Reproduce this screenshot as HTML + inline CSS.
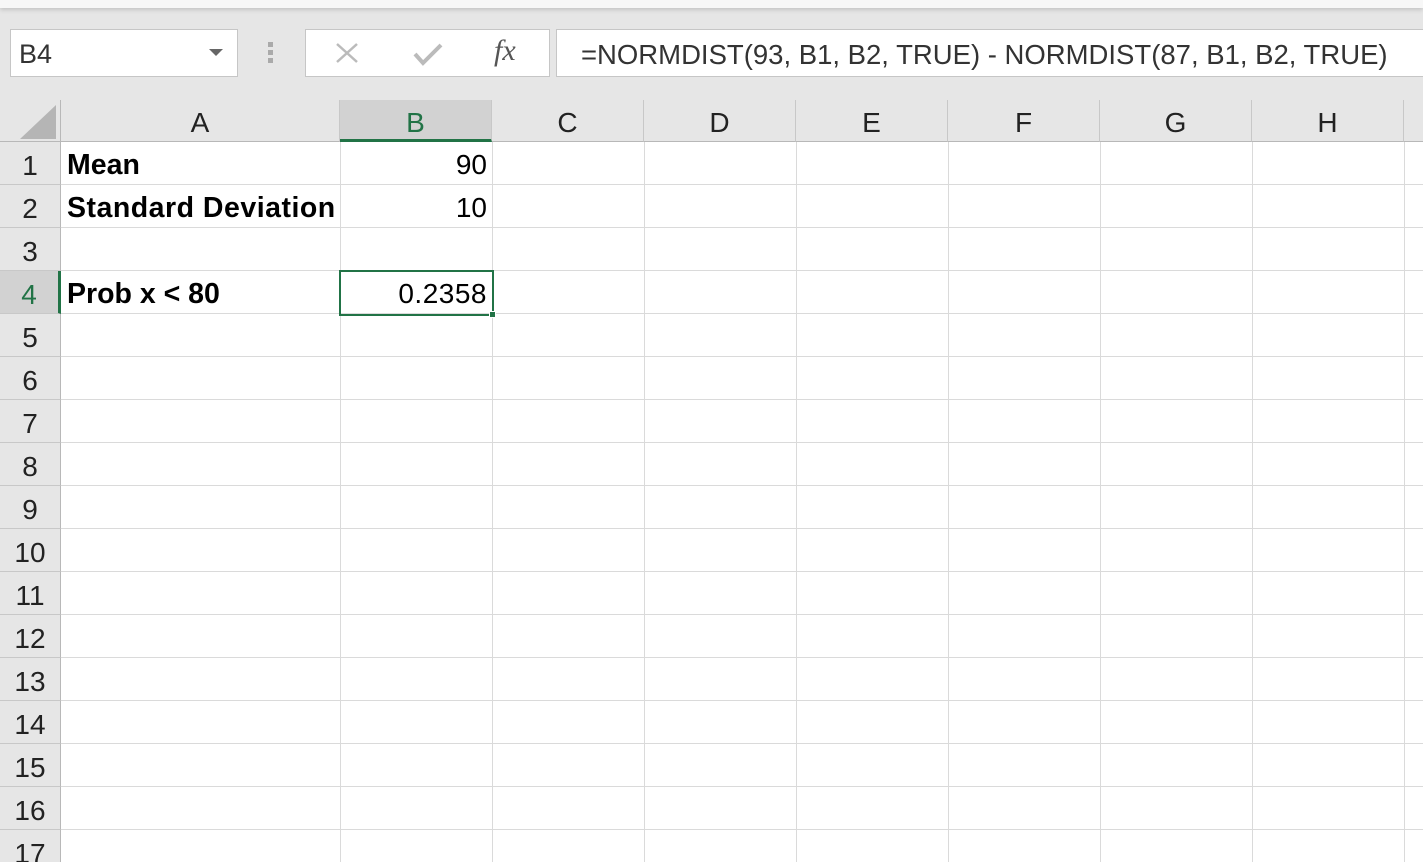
<!DOCTYPE html>
<html><head><meta charset="utf-8"><style>
*{margin:0;padding:0;box-sizing:border-box}
html,body{width:1423px;height:862px;overflow:hidden}
body{background:#e6e6e6;font-family:"Liberation Sans",sans-serif;position:relative}
.a{position:absolute}
.top{left:0;top:0;width:1423px;height:8px;background:#f7f7f7;box-shadow:0 2px 4px rgba(0,0,0,.15)}
.box{background:#fff;border:1px solid #c6c6c6}
.grid{left:0;top:100px;width:1423px;height:762px;background:#fff}
.ch{top:100px;height:42px;background:#e6e6e6;border-right:1px solid #c8c8c8;border-bottom:1px solid #b8b8b8;font-size:28px;color:#222;text-align:center;line-height:46px}
.rh{left:0;width:61px;height:43px;background:#e6e6e6;border-right:1px solid #b8b8b8;border-bottom:1px solid #c8c8c8;font-size:28px;color:#222;text-align:center;line-height:48px}
.hl{left:61px;width:1362px;height:1px;background:#dadada}
.vl{top:142px;width:1px;height:720px;background:#dadada}
.t{font-size:28px;line-height:46px;color:#000}
.b{font-weight:bold;font-size:28.5px}
</style></head><body>
<div class="a top"></div>
<div class="a box" style="left:10px;top:29px;width:228px;height:48px;font-size:27px;line-height:48px;padding-left:8px;color:#333">B4</div>
<div class="a" style="left:209px;top:49px;width:0;height:0;border-left:7px solid transparent;border-right:7px solid transparent;border-top:7px solid #666"></div>
<div class="a" style="left:268px;top:42px;width:5px;height:22px;background:repeating-linear-gradient(#aaa 0 5px,transparent 5px 8px)"></div>
<div class="a box" style="left:305px;top:29px;width:245px;height:48px"></div>
<svg class="a" style="left:334px;top:42px" width="26" height="22"><path d="M3 2L23 20M23 2L3 20" stroke="#bbb" stroke-width="2.5"/></svg>
<svg class="a" style="left:412px;top:41px" width="32" height="26"><path d="M3 13L11 22L29 4" stroke="#bbb" stroke-width="4" fill="none"/></svg>
<div class="a" style="left:494px;top:34px;font-family:'Liberation Serif',serif;font-style:italic;font-size:30px;color:#555">fx</div>
<div class="a box" style="left:556px;top:29px;width:880px;height:48px;font-size:27.5px;line-height:49px;padding-left:24px;color:#333;white-space:nowrap">=NORMDIST(93, B1, B2, TRUE) - NORMDIST(87, B1, B2, TRUE)</div>
<div class="a grid"></div>
<div class="a" style="left:0;top:100px;width:61px;height:42px;background:#e6e6e6;border-right:1px solid #b8b8b8;border-bottom:1px solid #b8b8b8"></div>
<div class="a" style="left:20px;top:105px;width:0;height:0;border-left:36px solid transparent;border-bottom:34px solid #b5b5b5"></div>
<div class="a ch" style="left:61px;width:279px">A</div>
<div class="a ch" style="left:340px;width:152px;background:#d2d2d2;color:#217346;border-bottom:3px solid #217346">B</div>
<div class="a ch" style="left:492px;width:152px">C</div>
<div class="a ch" style="left:644px;width:152px">D</div>
<div class="a ch" style="left:796px;width:152px">E</div>
<div class="a ch" style="left:948px;width:152px">F</div>
<div class="a ch" style="left:1100px;width:152px">G</div>
<div class="a ch" style="left:1252px;width:152px">H</div>
<div class="a ch" style="left:1404px;width:30px"></div>
<div class="a rh" style="top:142px">1</div><div class="a rh" style="top:185px">2</div><div class="a rh" style="top:228px">3</div>
<div class="a rh" style="top:271px;background:#d2d2d2;color:#217346;border-right:3px solid #217346">4</div>
<div class="a rh" style="top:314px">5</div><div class="a rh" style="top:357px">6</div><div class="a rh" style="top:400px">7</div><div class="a rh" style="top:443px">8</div><div class="a rh" style="top:486px">9</div><div class="a rh" style="top:529px">10</div><div class="a rh" style="top:572px">11</div><div class="a rh" style="top:615px">12</div><div class="a rh" style="top:658px">13</div><div class="a rh" style="top:701px">14</div><div class="a rh" style="top:744px">15</div><div class="a rh" style="top:787px">16</div><div class="a rh" style="top:830px">17</div>
<div class="a hl" style="top:184px"></div><div class="a hl" style="top:227px"></div><div class="a hl" style="top:270px"></div><div class="a hl" style="top:313px"></div><div class="a hl" style="top:356px"></div><div class="a hl" style="top:399px"></div><div class="a hl" style="top:442px"></div><div class="a hl" style="top:485px"></div><div class="a hl" style="top:528px"></div><div class="a hl" style="top:571px"></div><div class="a hl" style="top:614px"></div><div class="a hl" style="top:657px"></div><div class="a hl" style="top:700px"></div><div class="a hl" style="top:743px"></div><div class="a hl" style="top:786px"></div><div class="a hl" style="top:829px"></div>
<div class="a vl" style="left:340px"></div><div class="a vl" style="left:492px"></div><div class="a vl" style="left:644px"></div><div class="a vl" style="left:796px"></div><div class="a vl" style="left:948px"></div><div class="a vl" style="left:1100px"></div><div class="a vl" style="left:1252px"></div><div class="a vl" style="left:1404px"></div>
<div class="a t b" style="left:67px;top:142px">Mean</div>
<div class="a t b" style="left:67px;top:185px;white-space:nowrap;letter-spacing:0.5px">Standard Deviation</div>
<div class="a t b" style="left:67px;top:271px">Prob x &lt; 80</div>
<div class="a t" style="left:340px;width:147px;top:142px;text-align:right">90</div>
<div class="a t" style="left:340px;width:147px;top:185px;text-align:right">10</div>
<div class="a" style="left:339px;top:270px;width:155px;height:46px;border:2px solid #217346"></div>
<div class="a t" style="left:340px;width:147px;top:271px;text-align:right;letter-spacing:0.5px">0.2358</div>
<div class="a" style="left:489px;top:311px;width:7px;height:7px;background:#217346;border:1px solid #fff"></div>
</body></html>
